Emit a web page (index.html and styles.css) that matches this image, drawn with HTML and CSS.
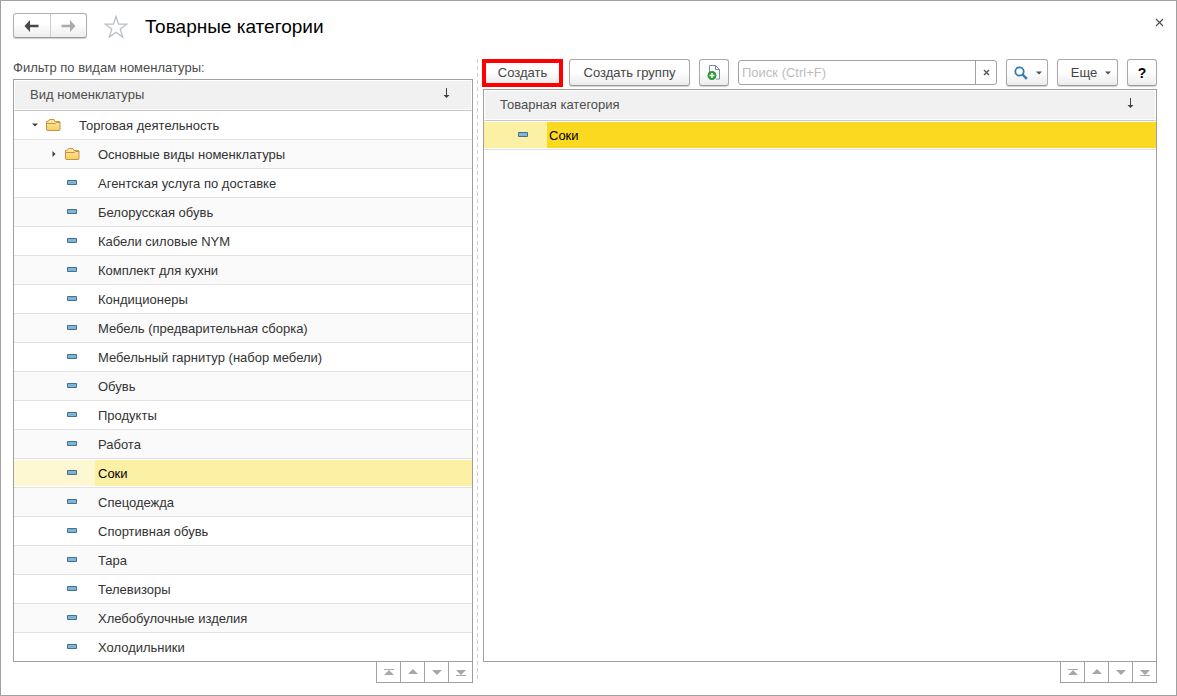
FILE: index.html
```html
<!DOCTYPE html>
<html lang="ru">
<head>
<meta charset="utf-8">
<title>Товарные категории</title>
<link rel="stylesheet" href="styles.css">
</head>
<body>
<svg class="sprite" aria-hidden="true">
  <defs>
    <linearGradient id="folder-fill" x1="0" y1="0" x2="0" y2="1"><stop offset="0" stop-color="#ffe9a0"/><stop offset="1" stop-color="#f5d062"/></linearGradient>
  </defs>
  <symbol id="folder" viewBox="0 0 15 13"><path d="M.5 2.500v8.500l.5.5h12.500l.5-.5V3l-.5-.5H9L8 .5H3.500l-1 1.500z" fill="url(#folder-fill)" stroke="#c6924a"/><path d="M1 4.500h8.500l1-1H14" fill="none" stroke="#c6924a"/></symbol>
  <symbol id="item" viewBox="0 0 10 5"><path d="M.5.5h9v4h-9z" fill="#7fb4d8" stroke="#44708f"/></symbol>
  <symbol id="sort" viewBox="0 0 7 10"><path d="M3 0h1v7h2.500L3.500 10 .5 7H3z" fill="#404040"/></symbol>
  <symbol id="up" viewBox="0 0 10 8"><path d="M5 1l5 5H0z" fill="#a8a8a8"/></symbol>
  <symbol id="down" viewBox="0 0 10 8"><path d="M5 7L0 2h10z" fill="#a8a8a8"/></symbol>
  <symbol id="first" viewBox="0 0 10 8"><path d="M0 1h10v1H0zM5 2l5 5H0z" fill="#a8a8a8"/></symbol>
  <symbol id="last" viewBox="0 0 10 8"><path d="M0 7h10v1H0zM5 7L0 2h10z" fill="#a8a8a8"/></symbol>
</svg>
<div class="window">
  <header class="titlebar">
    <div class="history">
      <button type="button" aria-label="Назад"><svg width="15" height="12" viewBox="0 0 15 12"><path d="M6 0v4.800h8.500v2.400H6V12L.5 6z" fill="#484848"/></svg></button>
      <button type="button" aria-label="Вперед"><svg width="15" height="12" viewBox="0 0 15 12"><path d="M9 0v4.800H.5v2.400H9V12l5.500-6z" fill="#ababab"/></svg></button>
    </div>
    <button class="star" type="button" aria-label="Избранное"><svg width="24" height="24" viewBox="0 0 24 24"><path d="M12 1.500l2.600 7.700h8.100l-6.500 4.900 2.500 7.900-6.700-4.800L5.300 22l2.500-7.900L1.300 9.200h8.100z" fill="#fff" stroke="#b7bfc6" stroke-width="1.300"/></svg></button>
    <h1>Товарные категории</h1>
    <button class="close" type="button" aria-label="Закрыть"><svg width="9" height="9" viewBox="0 0 9 9"><path d="M1 1l7 7M8 1L1 8" stroke="#505050" stroke-width="1.200"/></svg></button>
  </header>
  <main class="panes">
    <section class="pane">
      <div class="caption" id="filter-caption">Фильтр по видам номенлатуры:</div>
      <div class="grid">
        <table aria-labelledby="filter-caption">
          <thead><tr><th><div class="head"><span>Вид номенклатуры</span><svg width="7" height="10"><use href="#sort"/></svg></div></th></tr></thead>
          <tbody>
            <tr><td><div class="row root"><span class="lead"><svg class="toggle" width="6" height="4" viewBox="0 0 6 4"><path d="M0 .5h6L3 3.500z" fill="#404040"/></svg><svg width="15" height="13"><use href="#folder"/></svg></span><span class="name">Торговая деятельность</span></div></td></tr>
            <tr><td><div class="row"><span class="lead"><svg class="toggle" width="6" height="6" viewBox="0 0 6 6"><path d="M1.500 0v6l3-3z" fill="#404040"/></svg><svg width="15" height="13"><use href="#folder"/></svg></span><span class="name">Основные виды номенклатуры</span></div></td></tr>
            <tr><td><div class="row"><span class="lead"><svg class="dash" width="10" height="5"><use href="#item"/></svg></span><span class="name">Агентская услуга по доставке</span></div></td></tr>
            <tr><td><div class="row"><span class="lead"><svg class="dash" width="10" height="5"><use href="#item"/></svg></span><span class="name">Белорусская обувь</span></div></td></tr>
            <tr><td><div class="row"><span class="lead"><svg class="dash" width="10" height="5"><use href="#item"/></svg></span><span class="name">Кабели силовые NYM</span></div></td></tr>
            <tr><td><div class="row"><span class="lead"><svg class="dash" width="10" height="5"><use href="#item"/></svg></span><span class="name">Комплект для кухни</span></div></td></tr>
            <tr><td><div class="row"><span class="lead"><svg class="dash" width="10" height="5"><use href="#item"/></svg></span><span class="name">Кондиционеры</span></div></td></tr>
            <tr><td><div class="row"><span class="lead"><svg class="dash" width="10" height="5"><use href="#item"/></svg></span><span class="name">Мебель (предварительная сборка)</span></div></td></tr>
            <tr><td><div class="row"><span class="lead"><svg class="dash" width="10" height="5"><use href="#item"/></svg></span><span class="name">Мебельный гарнитур (набор мебели)</span></div></td></tr>
            <tr><td><div class="row"><span class="lead"><svg class="dash" width="10" height="5"><use href="#item"/></svg></span><span class="name">Обувь</span></div></td></tr>
            <tr><td><div class="row"><span class="lead"><svg class="dash" width="10" height="5"><use href="#item"/></svg></span><span class="name">Продукты</span></div></td></tr>
            <tr><td><div class="row"><span class="lead"><svg class="dash" width="10" height="5"><use href="#item"/></svg></span><span class="name">Работа</span></div></td></tr>
            <tr><td><div class="row selected"><span class="lead"><svg class="dash" width="10" height="5"><use href="#item"/></svg></span><span class="name">Соки</span></div></td></tr>
            <tr><td><div class="row"><span class="lead"><svg class="dash" width="10" height="5"><use href="#item"/></svg></span><span class="name">Спецодежда</span></div></td></tr>
            <tr><td><div class="row"><span class="lead"><svg class="dash" width="10" height="5"><use href="#item"/></svg></span><span class="name">Спортивная обувь</span></div></td></tr>
            <tr><td><div class="row"><span class="lead"><svg class="dash" width="10" height="5"><use href="#item"/></svg></span><span class="name">Тара</span></div></td></tr>
            <tr><td><div class="row"><span class="lead"><svg class="dash" width="10" height="5"><use href="#item"/></svg></span><span class="name">Телевизоры</span></div></td></tr>
            <tr><td><div class="row"><span class="lead"><svg class="dash" width="10" height="5"><use href="#item"/></svg></span><span class="name">Хлебобулочные изделия</span></div></td></tr>
            <tr><td><div class="row last"><span class="lead"><svg class="dash" width="10" height="5"><use href="#item"/></svg></span><span class="name">Холодильники</span></div></td></tr>
          </tbody>
        </table>
      </div>
      <div class="pager">
        <button type="button" aria-label="В начало"><svg width="10" height="8"><use href="#first"/></svg></button>
        <button type="button" aria-label="Вверх"><svg width="10" height="8"><use href="#up"/></svg></button>
        <button type="button" aria-label="Вниз"><svg width="10" height="8"><use href="#down"/></svg></button>
        <button type="button" aria-label="В конец"><svg width="10" height="8"><use href="#last"/></svg></button>
      </div>
    </section>
    <div class="splitter"></div>
    <section class="pane">
      <div class="toolbar">
        <button class="btn create" type="button">Создать</button>
        <button class="btn group" type="button">Создать группу</button>
        <button class="btn square" type="button" aria-label="Создать копированием"><svg width="15" height="17" viewBox="0 0 15 17"><path d="M2.500 8V1.500h6l4 4v9.500H9" fill="#fff" stroke="#7c8b99"/><path d="M8.500 1.500v4h4" fill="none" stroke="#7c8b99"/><circle cx="5" cy="11.500" r="4.500" fill="#2f9a3d"/><path d="M5 9v5M2.500 11.500h5" stroke="#fff" stroke-width="1.400"/></svg></button>
        <div class="search">
          <input type="text" placeholder="Поиск (Ctrl+F)" aria-label="Поиск">
          <button type="button" aria-label="Очистить"><svg width="7" height="7" viewBox="0 0 7 7"><path d="M1 1l5 5M6 1L1 6" stroke="#555" stroke-width="1.400"/></svg></button>
        </div>
        <button class="btn find" type="button" aria-label="Найти"><svg width="14" height="14" viewBox="0 0 14 14"><circle cx="5.500" cy="5.500" r="4.200" fill="none" stroke="#3479ac" stroke-width="1.800"/><path d="M8.500 8.500l4.300 4.300" stroke="#3479ac" stroke-width="2.400"/></svg><svg width="6" height="4" viewBox="0 0 6 4"><path d="M0 .5h6L3 3.500z" fill="#505050"/></svg></button>
        <button class="btn more" type="button">Еще<svg width="6" height="4" viewBox="0 0 6 4"><path d="M0 .5h6L3 3.500z" fill="#505050"/></svg></button>
        <button class="btn square help" type="button">?</button>
      </div>
      <div class="grid">
        <table aria-label="Товарные категории">
          <thead><tr><th><div class="head"><span>Товарная категория</span><svg width="7" height="10"><use href="#sort"/></svg></div></th></tr></thead>
          <tbody>
            <tr><td><div class="row active"><span class="lead"><svg class="dash" width="10" height="5"><use href="#item"/></svg></span><span class="name">Соки</span></div></td></tr>
          </tbody>
        </table>
      </div>
      <div class="pager">
        <button type="button" aria-label="В начало"><svg width="10" height="8"><use href="#first"/></svg></button>
        <button type="button" aria-label="Вверх"><svg width="10" height="8"><use href="#up"/></svg></button>
        <button type="button" aria-label="Вниз"><svg width="10" height="8"><use href="#down"/></svg></button>
        <button type="button" aria-label="В конец"><svg width="10" height="8"><use href="#last"/></svg></button>
      </div>
    </section>
  </main>
</div>
</body>
</html>
```
FILE: styles.css
```css
* { box-sizing: border-box; }
body { margin: 0; background: #fff; color: #333; font: 13px/16px "Liberation Sans", Arial, sans-serif; }
button, input { font: inherit; color: inherit; }
button { display: flex; align-items: center; justify-content: center; margin: 0; padding: 0; border: 0; background: none; }
svg { display: block; flex: none; }
.sprite { position: absolute; width: 0; height: 0; }

.window { display: flex; flex-direction: column; min-height: 100vh; padding: 12px 19px 12px 12px; border: 1px solid #a0a0a0; }

.titlebar { display: flex; align-items: flex-start; height: 46px; }
.history { display: flex; width: 74px; height: 25px; border: 1px solid #b0b0b0; border-bottom-color: #999; border-radius: 3px; background: linear-gradient(#fff 40%, #ededed); box-shadow: 0 1px 1px #ccc; }
.history button { flex: 1; }
.history button + button { border-left: 1px solid #ccc; }
.star { margin: 2px 0 0 17px; }
h1 { flex: 1; margin: 2px 0 0 17px; color: #000; font-size: 19px; line-height: 24px; font-weight: 400; }
.close { width: 17px; height: 17px; margin: 1px -11px 0 0; }

.panes { display: grid; grid-template-columns: 460fr 10px 674fr; flex: 1; }
.pane { display: flex; flex-direction: column; min-width: 0; }
.splitter { width: 1px; margin: 0 0 3px 4px; background: repeating-linear-gradient(#d0d0d0 0 4px, #fff 4px 7px); }
.caption { height: 20px; line-height: 18px; color: #4d4d4d; }

.grid { flex: 1; border: 1px solid #a0a0a0; }
table { width: 100%; border-collapse: collapse; }
th, td { padding: 0; font-weight: 400; text-align: left; }
.head { display: flex; justify-content: space-between; align-items: center; height: 31px; padding: 0 21px 2px 15px; border: 1px solid #fff; border-bottom: 1px solid #c8c8c8; background: #f1f1f1; color: #4d4d4d; box-shadow: inset 0 -1px #fff; }
.head svg { margin-bottom: 3px; }
.row { display: flex; height: 29px; padding: 1px 0; border-bottom: 1px solid #e2e2e2; line-height: 28px; }
tr:nth-child(even) .row { background: #fafafa; }
.row.last { height: 28px; border-bottom: 0; }
.lead { display: flex; align-items: center; justify-content: flex-end; width: 81px; padding-right: 15px; }
.root .lead { width: 62px; }
.lead .toggle { margin-right: 8px; }
.lead .dash { margin: 0 3px 2px 0; }
.name { flex: 1; height: 26px; padding-left: 3px; }
.selected .lead { background: #fdf7d2; }
.selected .name { background: #fcf0a4; color: #000; }
.active .lead { width: 63px; padding-right: 16px; background: #fcf0a4; }
.active .name { padding-left: 2px; background: #fbd920; color: #000; }

.pager { display: flex; align-self: flex-end; height: 21px; border: solid #a0a0a0; border-width: 0 1px 1px; }
.pager button { width: 24px; }
.pager button:first-child { width: 23px; }
.pager button + button { border-left: 1px solid #a0a0a0; }

.toolbar { display: flex; align-items: flex-start; gap: 9px; height: 30px; }
.btn { flex: none; height: 27px; border: 1px solid #aaa; border-bottom-color: #999; border-radius: 3px; background: linear-gradient(#fff 45%, #ececec); color: #444; box-shadow: 0 1px 1px #d0d0d0; }
.create { width: 81px; height: 28px; margin: 0 -3px 0 -1px; border: 4px solid #f00; border-radius: 0; box-shadow: none; }
.group { width: 121px; }
.square { width: 30px; }
.find { width: 42px; gap: 8px; padding-left: 2px; }
.more { width: 61px; gap: 8px; padding-left: 7px; }
.help { color: #000; font-size: 14px; font-weight: 700; }
.search { display: flex; flex: 1; min-width: 0; height: 25px; margin-top: 1px; border: 1px solid #a0a0a0; border-radius: 3px; }
.search input { flex: 1; min-width: 0; padding: 0 3px; border: 0; background: none; outline: 0; }
.search input::placeholder { color: #bdbdbd; opacity: 1; }
.search button { width: 21px; border-left: 1px solid #a0a0a0; }
```
